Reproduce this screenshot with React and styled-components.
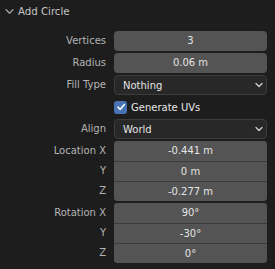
import styled, { createGlobalStyle } from "styled-components";

const GlobalStyle = createGlobalStyle`
  html, body {
    margin: 0;
    padding: 0;
    background: #1d1d1d;
  }
  body {
    font-family: "DejaVu Sans", "Liberation Sans", sans-serif;
  }
`;

const Panel = styled.div`
  width: 275px;
  height: 269px;
  background: #1d1d1d;
  box-sizing: border-box;
  padding: 0 8px 0 5px;
  overflow: hidden;
`;

const Header = styled.div`
  display: flex;
  align-items: center;
  height: 23px;
  gap: 4px;
  color: #c4c4c4;
  font-size: 10.2px;
`;

const Body = styled.div`
  display: flex;
  flex-direction: column;
  gap: 2px;
  margin-top: 8px;
  padding-left: 2px;
`;

const Row = styled.div`
  display: grid;
  grid-template-columns: 99px 1fr;
  column-gap: 8px;
  align-items: stretch;
`;

const Labels = styled.div`
  display: flex;
  flex-direction: column;
`;

const Label = styled.div`
  height: 20px;
  line-height: 20px;
  text-align: right;
  color: #b4b4b4;
  font-size: 10px;
  white-space: nowrap;
`;

const Group = styled.div`
  display: flex;
  flex-direction: column;
  border-radius: 4px;
  overflow: hidden;
  background: #545454;
`;

const NumField = styled.div`
  height: 20px;
  box-sizing: border-box;
  text-align: center;
  color: #e4e4e4;
  font-size: 10px;
  background: #545454;
  border-top: ${(p) => (p.$first ? "none" : "1px solid #3a3a3a")};
  line-height: ${(p) => (p.$first ? "20px" : "19px")};
`;

const Select = styled.div`
  height: 20px;
  box-sizing: border-box;
  border: 1px solid #3c3c3c;
  border-radius: 4px;
  background: #282828;
  color: #e4e4e4;
  font-size: 10px;
  display: flex;
  align-items: center;
  justify-content: space-between;
  padding: 0 3px 0 8px;
`;

const CheckRow = styled.label`
  display: flex;
  align-items: center;
  gap: 4px;
  height: 20px;
  color: #e6e6e6;
  font-size: 10px;
`;

const Box = styled.span`
  width: 13px;
  height: 13px;
  border-radius: 3px;
  background: #4772b3;
  display: flex;
  align-items: center;
  justify-content: center;
`;

const Chevron = ({ color = "#bdbdbd", size = 8 }) => (
  <svg width={size} height={size} viewBox="0 0 8 8">
    <path d="M1 2.5 L4 5.5 L7 2.5" fill="none" stroke={color} strokeWidth="1.3" strokeLinecap="round" strokeLinejoin="round" />
  </svg>
);

const FieldRow = ({ labels, values }) => (
  <Row>
    <Labels>
      {labels.map((l, i) => (
        <Label key={i}>{l}</Label>
      ))}
    </Labels>
    <Group>
      {values.map((v, i) => (
        <NumField key={i} $first={i === 0}>
          {v}
        </NumField>
      ))}
    </Group>
  </Row>
);

const SelectRow = ({ label, value }) => (
  <Row>
    <Labels>
      <Label>{label}</Label>
    </Labels>
    <Select>
      {value}
      <Chevron color="#d0d0d0" size={8} />
    </Select>
  </Row>
);

export default function App() {
  return (
    <>
      <GlobalStyle />
      <Panel>
        <Header>
          <Chevron color="#9a9a9a" size={9} />
          Add Circle
        </Header>
        <Body>
          <FieldRow labels={["Vertices"]} values={["3"]} />
          <FieldRow labels={["Radius"]} values={["0.06 m"]} />
          <SelectRow label="Fill Type" value="Nothing" />
          <Row>
            <span />
            <CheckRow>
              <Box>
                <svg width="10" height="10" viewBox="0 0 10 10">
                  <path d="M2 5.2 L4.2 7.3 L8.2 2.7" fill="none" stroke="#fff" strokeWidth="1.6" strokeLinecap="round" strokeLinejoin="round" />
                </svg>
              </Box>
              Generate UVs
            </CheckRow>
          </Row>
          <SelectRow label="Align" value="World" />
          <FieldRow labels={["Location X", "Y", "Z"]} values={["-0.441 m", "0 m", "-0.277 m"]} />
          <FieldRow labels={["Rotation X", "Y", "Z"]} values={["90°", "-30°", "0°"]} />
        </Body>
      </Panel>
    </>
  );
}
